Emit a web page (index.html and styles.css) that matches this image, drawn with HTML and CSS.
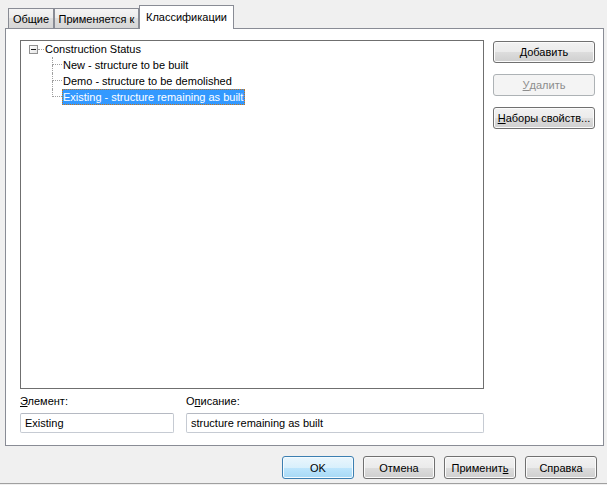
FILE: index.html
```html
<!DOCTYPE html>
<html>
<head>
<meta charset="utf-8">
<link rel="stylesheet" href="styles.css">
</head>
<body>
<div class="dialog">
  <div class="tabs">
    <div class="tab tab-general">Общие</div>
    <div class="tab tab-applies">Применяется к</div>
    <div class="tab tab-active">Классификации</div>
  </div>
  <div class="panel">
    <div class="top">
      <div class="tree">
        <div class="row root">
          <span class="expander"><span class="minus"></span></span>
          <span class="hdots"></span>
          <span class="label">Construction Status</span>
        </div>
        <div class="row child">
          <span class="conn"><span class="up"></span><span class="down"></span></span>
          <span class="label">New - structure to be built</span>
        </div>
        <div class="row child">
          <span class="conn"><span class="up"></span><span class="down"></span></span>
          <span class="label">Demo - structure to be demolished</span>
        </div>
        <div class="row child last">
          <span class="conn"><span class="up"></span><span class="down"></span></span>
          <span class="label selected">Existing - structure remaining as built</span>
        </div>
      </div>
      <div class="side">
        <button class="btn side-btn"><u>Д</u>обавить</button>
        <button class="btn side-btn disabled"><u>У</u>далить</button>
        <button class="btn side-btn"><u>Н</u>аборы свойств...</button>
      </div>
    </div>
    <div class="fields">
      <div class="field field-elem">
        <div class="flabel"><u>Э</u>лемент:</div>
        <div class="input">Existing</div>
      </div>
      <div class="field field-desc">
        <div class="flabel">О<u>п</u>исание:</div>
        <div class="input">structure remaining as built</div>
      </div>
    </div>
  </div>
  <div class="footer">
    <button class="btn foot-btn default">OK</button>
    <button class="btn foot-btn">Отмена</button>
    <button class="btn foot-btn">Применит<u>ь</u></button>
    <button class="btn foot-btn">Справка</button>
  </div>
</div>
</body>
</html>
```

FILE: styles.css
```css
html, body {
  margin: 0;
  padding: 0;
}
body {
  width: 607px;
  height: 485px;
  background: #f0f0f0;
  font-family: "Liberation Sans", Arial, sans-serif;
  font-size: 11px;
  color: #000;
  overflow: hidden;
}
.dialog {
  display: flex;
  flex-direction: column;
  height: 483px;
  border-bottom: 1px solid #a0a0a0;
}
.tabs {
  display: flex;
  align-items: flex-end;
  height: 28px;
  padding-left: 8px;
}
.tab {
  box-sizing: border-box;
  height: 20px;
  border: 1px solid #898c95;
  border-bottom: none;
  background: linear-gradient(#f4f4f4, #ebebeb 50%, #dedede 50%, #d6d6d6);
  display: flex;
  align-items: center;
  justify-content: center;
  padding-top: 1px;
}
.tab-general { width: 46px; }
.tab-applies { width: 85px; }
.tab-active {
  width: 95px;
  height: 24px;
  background: #fff;
  margin-bottom: -1px;
  position: relative;
  z-index: 1;
  padding-top: 0;
  padding-bottom: 2px;
}
.panel {
  box-sizing: border-box;
  margin-left: 5px;
  width: 599px;
  border: 1px solid #898c95;
  background: #fff;
  padding: 11px 8px 12px 14px;
}
.top {
  display: flex;
  height: 349px;
}
.tree {
  box-sizing: border-box;
  width: 464px;
  height: 349px;
  border: 1px solid #6f6f6f;
  background: #fff;
}
.row {
  height: 16px;
  display: flex;
  align-items: center;
  white-space: nowrap;
}
.root {
  padding-left: 8px;
}
.expander {
  box-sizing: border-box;
  width: 9px;
  height: 9px;
  border: 1px solid #919191;
  background: linear-gradient(135deg, #ffffff, #e4e4e4);
  display: flex;
  align-items: center;
  justify-content: center;
}
.minus {
  width: 5px;
  height: 1px;
  background: #1e1e1e;
}
.hdots {
  width: 6px;
  height: 0;
  border-top: 1px dotted #a0a0a0;
  margin-top: 1px;
}
.label {
  padding: 0 1px;
  height: 15px;
  line-height: 15px;
  box-sizing: border-box;
}
.child {
  padding-left: 31px;
}
.conn {
  display: flex;
  flex-direction: column;
  width: 10px;
  height: 16px;
}
.conn .up {
  box-sizing: border-box;
  height: 8px;
  border-left: 1px dotted #a0a0a0;
  border-bottom: 1px dotted #a0a0a0;
}
.conn .down {
  height: 8px;
  border-left: 1px dotted #a0a0a0;
}
.last .conn .down {
  border-left: none;
}
.label.selected {
  background: #3399ff;
  color: #fff;
  outline: 1px dotted #c8741a;
  outline-offset: -1px;
  padding: 0 2px 0 1px;
  height: 16px;
  line-height: 16px;
}
.side {
  display: flex;
  flex-direction: column;
  gap: 11px;
  margin-left: 9px;
  padding-top: 1px;
}
.btn {
  box-sizing: border-box;
  font-family: "Liberation Sans", Arial, sans-serif;
  font-size: 11px;
  color: #000;
  border: 1px solid #707070;
  border-radius: 3px;
  background: linear-gradient(#f2f2f2, #ebebeb 50%, #dddddd 50%, #cfcfcf);
  box-shadow: inset 0 0 0 1px #fbfbfb;
  padding: 0;
  margin: 0;
  display: flex;
  align-items: center;
  justify-content: center;
}
.side-btn {
  width: 102px;
  height: 22px;
}
.btn.disabled {
  border-color: #adb2b5;
  background: #f4f4f4;
  color: #8d8d8d;
  box-shadow: none;
}
.fields {
  display: flex;
  gap: 12px;
}
.field-elem { width: 154px; }
.field-desc { width: 298px; }
.flabel {
  margin-top: 6px;
  height: 13px;
  line-height: 13px;
}
.input {
  box-sizing: border-box;
  margin-top: 5px;
  height: 20px;
  border: 1px solid #c6cbd3;
  border-top-color: #b5b9c2;
  border-radius: 2px;
  padding-left: 4px;
  line-height: 18px;
  background: #fff;
  white-space: nowrap;
}
.footer {
  flex: 1;
  display: flex;
  justify-content: flex-end;
  align-items: flex-start;
  gap: 9px;
  padding: 10px 10px 0 0;
}
.foot-btn {
  width: 72px;
  height: 23px;
}
.btn.default {
  border-color: #3c7fb1;
  background: linear-gradient(#eaf6fd, #d9f0fc 50%, #bee6fd 50%, #a7d9f5);
  box-shadow: inset 0 0 0 1px #f4fbff;
}
```
